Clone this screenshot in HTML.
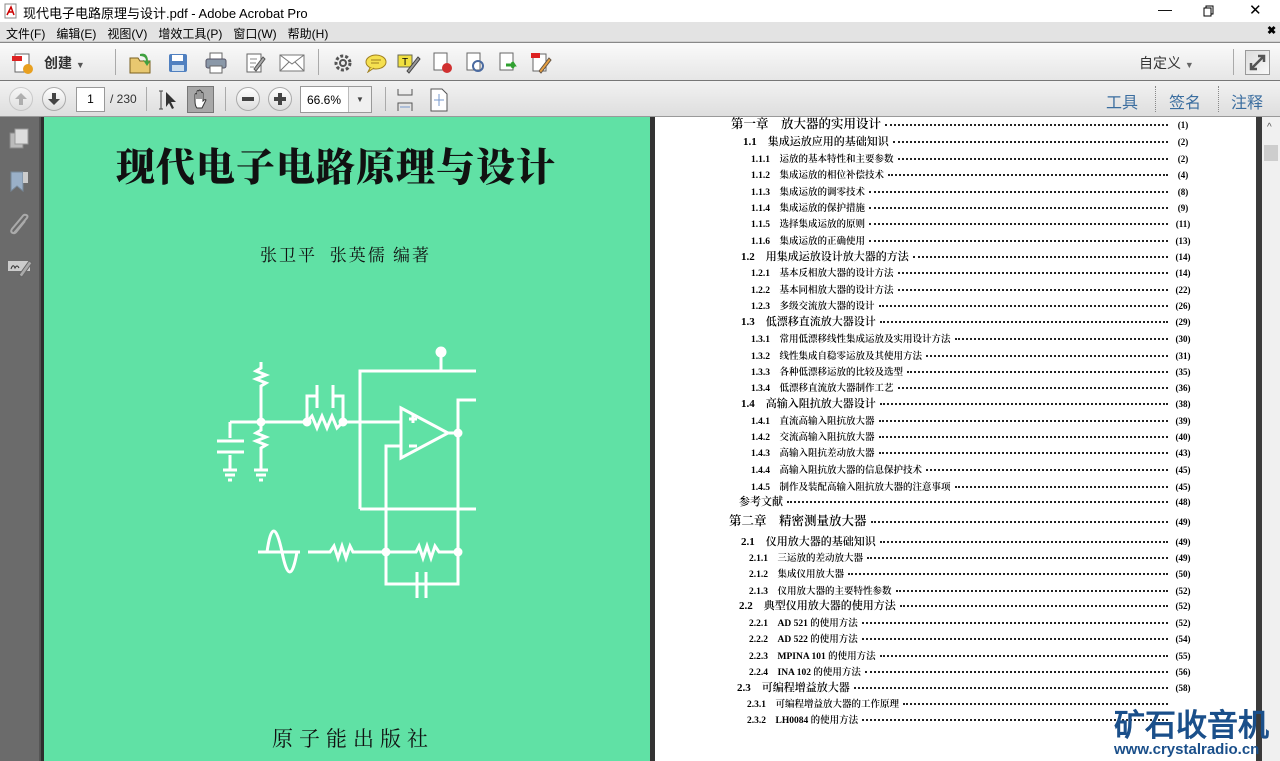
<!DOCTYPE html>
<html><head><meta charset="utf-8"><style>
*{margin:0;padding:0;box-sizing:border-box}
body{width:1280px;height:761px;overflow:hidden;position:relative;background:#525252;font-family:"Liberation Sans","Noto Sans CJK SC",sans-serif;font-size:12px;color:#000}
.a{position:absolute}
#title{left:0;top:0;width:1280px;height:22px;background:#fff}
#menu{left:0;top:22px;width:1280px;height:20px;background:#e3e3e3;border-bottom:1px solid #cfcfcf}
#menu span{margin-right:11px}
#tb1{left:0;top:42px;width:1280px;height:39px;background:linear-gradient(#fafafa,#e6e6e6);border-top:1px solid #888;border-bottom:1px solid #777}
#tb2{left:0;top:81px;width:1280px;height:36px;background:linear-gradient(#f2f2f2,#dedede);border-bottom:1px solid #999}
.sep{position:absolute;width:1px;background:#aaa}
.rb{position:absolute;width:24px;height:24px;border-radius:50%;border:1px solid #aaa;background:linear-gradient(#fff,#ddd)}
#nav{left:0;top:117px;width:40px;height:644px;background:#6b6b6b;border-right:1px solid #555}
#green{left:44px;top:117px;width:606px;height:644px;background:#60e1a5}
#page{left:655px;top:117px;width:601px;height:644px;background:#fff;font-family:"Liberation Serif","Noto Serif CJK SC",serif}
#sb{left:1262px;top:117px;width:18px;height:644px;background:#f0f0f0}
.r{position:absolute;display:flex;align-items:baseline;right:62px;white-space:nowrap;color:#000;font-weight:600}
.r .d{flex:1;border-bottom:2px dotted #222;margin:0 4px;height:1px;transform:translateY(-2px)}
.r .p{width:22px;text-align:center;font-size:9px}
.s{font-size:9.5px}.m{font-size:11px}.c{font-size:12.5px}
</style></head><body>
<div id="title" class="a">
<svg class="a" style="left:4px;top:3px" width="14" height="16"><rect x="1" y="1" width="11" height="14" fill="#fff" stroke="#888"/><path d="M3 12 L7 4 L10 12 M4 9 H9" stroke="#c00" fill="none" stroke-width="1.5"/></svg>
<div class="a" style="left:23px;top:3px;font-size:13px">现代电子电路原理与设计.pdf - Adobe Acrobat Pro</div>
<div class="a" style="left:1158px;top:1px;font-size:14px">—</div>
<svg class="a" style="left:1203px;top:5px" width="12" height="12"><rect x="1" y="3" width="7" height="8" fill="none" stroke="#000"/><path d="M3 3V1H10V9H8" fill="none" stroke="#000"/></svg>
<div class="a" style="left:1249px;top:1px;font-size:15px">✕</div>
</div>
<div id="menu" class="a"><div class="a" style="left:6px;top:3px;font-size:12px"><span>文件(F)</span><span>编辑(E)</span><span>视图(V)</span><span>增效工具(P)</span><span>窗口(W)</span><span>帮助(H)</span></div>
<div class="a" style="left:1267px;top:2px;font-size:11px;font-weight:bold">✖</div></div>
<div id="tb1" class="a">
<svg class="a" style="left:11px;top:8px" width="24" height="24"><rect x="4" y="3" width="14" height="18" fill="#fff" stroke="#666"/><rect x="1" y="5" width="10" height="5" fill="#d22"/><circle cx="17" cy="18" r="5" fill="#e8a020"/></svg>
<div class="a" style="left:44px;top:10px;font-size:14px;font-weight:bold;color:#333">创建 <span style="font-size:9px;color:#555">▼</span></div>
<div class="sep" style="left:115px;top:6px;height:26px"></div>
<svg class="a" style="left:128px;top:7px" width="26" height="26"><path d="M2 8H10L12 11H22V23H2Z" fill="#e8c870" stroke="#7a6020"/><path d="M12 4 Q20 2 20 12 L23 10 L19 16 L15 10 L18 11 Q18 6 12 6Z" fill="#40a040"/></svg>
<svg class="a" style="left:167px;top:9px" width="22" height="22"><rect x="2" y="2" width="18" height="18" rx="2" fill="#5080c0"/><rect x="5" y="3" width="11" height="6" fill="#fff"/><rect x="5" y="13" width="12" height="6" fill="#cde"/></svg>
<svg class="a" style="left:204px;top:9px" width="24" height="22"><rect x="6" y="1" width="12" height="7" fill="#fff" stroke="#666"/><rect x="2" y="7" width="20" height="9" rx="2" fill="#8a98a8" stroke="#556"/><rect x="6" y="14" width="12" height="7" fill="#fff" stroke="#666"/></svg>
<svg class="a" style="left:244px;top:9px" width="22" height="22"><rect x="3" y="2" width="14" height="18" fill="#fff" stroke="#666"/><path d="M6 7H13M6 11H12M6 15H10" stroke="#888"/><path d="M10 17 L19 5 L21 7 L12 19Z" fill="#aaa" stroke="#555"/></svg>
<svg class="a" style="left:279px;top:11px" width="26" height="18"><rect x="1" y="1" width="24" height="16" fill="#fff" stroke="#777"/><path d="M1 1 L13 10 L25 1 M1 17 L10 8 M25 17 L16 8" stroke="#777" fill="none"/></svg>
<div class="sep" style="left:318px;top:6px;height:26px"></div>
<svg class="a" style="left:333px;top:10px" width="20" height="20"><circle cx="10" cy="10" r="7" fill="none" stroke="#555" stroke-width="3" stroke-dasharray="3 2"/><circle cx="10" cy="10" r="3" fill="none" stroke="#555" stroke-width="2"/></svg>
<svg class="a" style="left:364px;top:10px" width="24" height="20"><ellipse cx="12" cy="9" rx="10" ry="7" fill="#f5e050" stroke="#a08020"/><path d="M6 15 L4 19 L10 15" fill="#f5e050" stroke="#a08020"/><path d="M7 7H17M7 10H15" stroke="#a08020"/></svg>
<svg class="a" style="left:397px;top:9px" width="24" height="22"><rect x="1" y="3" width="14" height="12" fill="#f0e040" stroke="#665"/><text x="5" y="13" font-size="10" font-family="Liberation Sans">T</text><path d="M10 19 L21 5 L23 7 L12 21Z" fill="#999" stroke="#444"/></svg>
<svg class="a" style="left:432px;top:9px" width="22" height="22"><rect x="2" y="1" width="13" height="17" fill="#fff" stroke="#666"/><circle cx="15" cy="16" r="5" fill="#d03030"/></svg>
<svg class="a" style="left:465px;top:9px" width="22" height="22"><rect x="2" y="1" width="13" height="17" fill="#fff" stroke="#666"/><circle cx="13" cy="14" r="5" fill="none" stroke="#4a6aa0" stroke-width="2"/></svg>
<svg class="a" style="left:498px;top:9px" width="22" height="22"><rect x="2" y="1" width="13" height="17" fill="#fff" stroke="#666"/><path d="M8 13 H16 L14 10 M16 13 L14 16" stroke="#30a030" stroke-width="3" fill="none"/></svg>
<svg class="a" style="left:530px;top:8px" width="22" height="24"><rect x="3" y="3" width="13" height="17" fill="#fff" stroke="#666"/><rect x="1" y="2" width="9" height="5" fill="#d22"/><path d="M9 20 L19 7 L21 9 L11 22Z" fill="#e8a040" stroke="#654"/></svg>
<div class="a" style="left:1139px;top:10px;font-size:14px;color:#333">自定义 <span style="font-size:9px;color:#666">▼</span></div>
<div class="sep" style="left:1233px;top:6px;height:26px"></div>
<div class="a" style="left:1245px;top:7px;width:25px;height:25px;border:1px solid #999;background:linear-gradient(135deg,#ddd,#f8f8f8)"><svg width="23" height="23"><path d="M5 18 L18 5 M12 5H18V11 M5 12V18H11" stroke="#555" stroke-width="2.5" fill="none"/></svg></div>
</div>
<div id="tb2" class="a">
<div class="rb" style="left:9px;top:6px;opacity:.5"><svg width="22" height="22"><path d="M11 5 L5 11 H9 V17 H13 V11 H17Z" fill="#777"/></svg></div>
<div class="rb" style="left:42px;top:6px"><svg width="22" height="22"><path d="M11 17 L5 11 H9 V5 H13 V11 H17Z" fill="#444"/></svg></div>
<div class="a" style="left:76px;top:6px;width:29px;height:25px;border:1px solid #999;background:#fff;text-align:center;line-height:23px;font-size:12px">1</div>
<div class="a" style="left:110px;top:11px;font-size:12px;color:#333">/ 230</div>
<div class="sep" style="left:146px;top:6px;height:24px"></div>
<svg class="a" style="left:157px;top:8px" width="22" height="22"><path d="M2 2H6M4 2V20M2 20H6" stroke="#444" fill="none"/><path d="M9 3 L9 18 L12 14 L15 20 L17 19 L14 13 L19 13Z" fill="#333"/></svg>
<div class="a" style="left:187px;top:5px;width:27px;height:27px;background:#a8a8a8;border:1px solid #777"><svg width="25" height="25"><path d="M7 14 V8 Q7 6 9 7 V12 V5 Q9 3 11 4 V12 V4 Q11 2 13 4 V12 V6 Q13 4 15 6 V14 Q17 12 18 13 L14 21 H9 Q7 19 7 14Z" fill="#fff" stroke="#333"/></svg></div>
<div class="sep" style="left:225px;top:6px;height:24px"></div>
<div class="rb" style="left:236px;top:6px"><svg width="22" height="22"><rect x="5" y="9" width="12" height="4" fill="#444"/></svg></div>
<div class="rb" style="left:268px;top:6px"><svg width="22" height="22"><path d="M5 9H9V5H13V9H17V13H13V17H9V13H5Z" fill="#444"/></svg></div>
<div class="a" style="left:300px;top:5px;width:72px;height:27px;border:1px solid #999;background:#fff"><span style="position:absolute;left:6px;top:6px;font-size:12px">66.6%</span><div style="position:absolute;left:47px;top:0;width:23px;height:25px;border-left:1px solid #bbb;background:#f0f0f0;text-align:center;line-height:25px;font-size:8px;color:#444">▼</div></div>
<div class="sep" style="left:385px;top:6px;height:24px"></div>
<svg class="a" style="left:396px;top:7px" width="20" height="24"><path d="M2 1V7H16V1 M2 23V15H16V23" stroke="#555" fill="none"/><path d="M4 19H14" stroke="#79c"/></svg>
<svg class="a" style="left:429px;top:7px" width="20" height="24"><path d="M2 1H13L18 6V23H2Z" fill="#fff" stroke="#555"/><path d="M10 6V18M5 12H15" stroke="#79c"/></svg>
<div class="a" style="left:1106px;top:8px;font-size:16px;color:#3a6d9f">工具</div>
<div class="a" style="left:1155px;top:5px;height:26px;border-left:1px dotted #888"></div>
<div class="a" style="left:1169px;top:8px;font-size:16px;color:#3a6d9f">签名</div>
<div class="a" style="left:1218px;top:5px;height:26px;border-left:1px dotted #888"></div>
<div class="a" style="left:1231px;top:8px;font-size:16px;color:#3a6d9f">注释</div>
</div>
<div id="nav" class="a">
<svg class="a" style="left:8px;top:10px" width="24" height="24"><rect x="2" y="6" width="13" height="15" fill="#bbb" stroke="#888"/><rect x="7" y="2" width="13" height="15" fill="#ddd" stroke="#999"/></svg>
<svg class="a" style="left:8px;top:52px" width="24" height="26"><path d="M3 3H15V22L9 17L3 22Z" fill="#9ab0c8" stroke="#789"/><path d="M15 3H20V14H15" fill="#ccc"/></svg>
<svg class="a" style="left:8px;top:96px" width="24" height="26"><path d="M6 20 L18 6 Q21 3 18 2 Q16 1 14 4 L4 16 Q2 19 5 20 Q7 21 9 18 L17 8" fill="none" stroke="#aaa" stroke-width="2"/></svg>
<svg class="a" style="left:7px;top:140px" width="26" height="22"><rect x="1" y="4" width="22" height="10" fill="#ccc"/><path d="M4 12 Q6 6 8 11 Q10 7 12 11" stroke="#333" fill="none"/><path d="M12 18 L22 4 L25 6 L15 20Z" fill="#aaa" stroke="#666"/></svg>
</div>
<div class="a" style="left:41px;top:117px;width:3px;height:644px;background:#2e2e2e"></div>
<div id="green" class="a">
<div class="a" style="left:72px;top:20px;font-family:'Noto Serif CJK SC',serif;font-size:39px;font-weight:900;letter-spacing:1px;color:#111">现代电子电路原理与设计</div>
<div class="a" style="left:216px;top:124px;font-family:'Noto Serif CJK SC',serif;font-size:17px;color:#111;letter-spacing:2px">张卫平&nbsp;&nbsp;张英儒 编著</div>
<div class="a" style="left:228px;top:606px;font-family:'Noto Serif CJK SC',serif;font-size:21px;color:#111;letter-spacing:6px">原子能出版社</div>
<svg class="a" style="left:156px;top:213px" width="300" height="300" viewBox="200 330 300 300" fill="none" stroke="#fff" stroke-width="3">
<path d="M261 362 V368 L256 371 L266 375 L256 379 L266 383 L261 386 V422"/>
<path d="M261 422 V430 L256 433 L266 437 L256 441 L266 445 L261 448 V470"/>
<path d="M254 470 H268 M256 475 H266 M259 480 H263"/>
<path d="M230 422 H307 M230 422 V438 M217 441 H244 M217 452 H244 M230 455 V470 M223 470 H237 M225 475 H235 M228 480 H232"/>
<path d="M307 422 L312 416 L317 428 L322 416 L327 428 L332 416 L337 428 L343 422 H400"/>
<path d="M307 422 V396 H317 M317 385 V408 M333 385 V408 M333 396 H343 V422"/>
<path d="M360 509 V371 H476 M441 357 V371"/>
<path d="M401 408 L448 433 L401 458 Z M409 419 H417 M413 415 V423 M409 446 H417"/>
<path d="M448 433 H458 V400 H476 M458 433 V509 H476 M360 509 H458"/>
<path d="M401 446 H386 V584 H458 V552"/>
<path d="M458 509 V552 H439 L435 546 L431 558 L427 546 L423 558 L419 546 L416 552 H386"/>
<path d="M386 552 H353 L350 546 L346 558 L342 546 L338 558 L334 546 L330 552 H308"/>
<path d="M417 572 V598 M426 572 V598 M386 584 H417 M426 584 H458"/>
<path d="M258 552 H300 M267 552 Q273 510 282 552 Q290 592 297 552"/>
<circle cx="261" cy="422" r="3" fill="#fff"/><circle cx="307" cy="422" r="3" fill="#fff"/><circle cx="343" cy="422" r="3" fill="#fff"/><circle cx="458" cy="433" r="3" fill="#fff"/><circle cx="386" cy="552" r="3" fill="#fff"/><circle cx="458" cy="552" r="3" fill="#fff"/><circle cx="441" cy="352" r="4" fill="#fff"/>
</svg>
</div>
<div class="a" style="left:650px;top:117px;width:5px;height:644px;background:#333"></div>
<div id="page" class="a">
<div class="r c" style="left:76px;top:-3px"><span>第一章　放大器的实用设计</span><span class="d"></span><span class="p">(1)</span></div>
<div class="r m" style="left:88px;top:16px"><span>1.1　集成运放应用的基础知识</span><span class="d"></span><span class="p">(2)</span></div>
<div class="r s" style="left:96px;top:34px"><span>1.1.1　运放的基本特性和主要参数</span><span class="d"></span><span class="p">(2)</span></div>
<div class="r s" style="left:96px;top:50px"><span>1.1.2　集成运放的相位补偿技术</span><span class="d"></span><span class="p">(4)</span></div>
<div class="r s" style="left:96px;top:67px"><span>1.1.3　集成运放的调零技术</span><span class="d"></span><span class="p">(8)</span></div>
<div class="r s" style="left:96px;top:83px"><span>1.1.4　集成运放的保护措施</span><span class="d"></span><span class="p">(9)</span></div>
<div class="r s" style="left:96px;top:99px"><span>1.1.5　选择集成运放的原则</span><span class="d"></span><span class="p">(11)</span></div>
<div class="r s" style="left:96px;top:116px"><span>1.1.6　集成运放的正确使用</span><span class="d"></span><span class="p">(13)</span></div>
<div class="r m" style="left:86px;top:131px"><span>1.2　用集成运放设计放大器的方法</span><span class="d"></span><span class="p">(14)</span></div>
<div class="r s" style="left:96px;top:148px"><span>1.2.1　基本反相放大器的设计方法</span><span class="d"></span><span class="p">(14)</span></div>
<div class="r s" style="left:96px;top:165px"><span>1.2.2　基本同相放大器的设计方法</span><span class="d"></span><span class="p">(22)</span></div>
<div class="r s" style="left:96px;top:181px"><span>1.2.3　多级交流放大器的设计</span><span class="d"></span><span class="p">(26)</span></div>
<div class="r m" style="left:86px;top:196px"><span>1.3　低漂移直流放大器设计</span><span class="d"></span><span class="p">(29)</span></div>
<div class="r s" style="left:96px;top:214px"><span>1.3.1　常用低漂移线性集成运放及实用设计方法</span><span class="d"></span><span class="p">(30)</span></div>
<div class="r s" style="left:96px;top:231px"><span>1.3.2　线性集成自稳零运放及其使用方法</span><span class="d"></span><span class="p">(31)</span></div>
<div class="r s" style="left:96px;top:247px"><span>1.3.3　各种低漂移运放的比较及选型</span><span class="d"></span><span class="p">(35)</span></div>
<div class="r s" style="left:96px;top:263px"><span>1.3.4　低漂移直流放大器制作工艺</span><span class="d"></span><span class="p">(36)</span></div>
<div class="r m" style="left:86px;top:278px"><span>1.4　高输入阻抗放大器设计</span><span class="d"></span><span class="p">(38)</span></div>
<div class="r s" style="left:96px;top:296px"><span>1.4.1　直流高输入阻抗放大器</span><span class="d"></span><span class="p">(39)</span></div>
<div class="r s" style="left:96px;top:312px"><span>1.4.2　交流高输入阻抗放大器</span><span class="d"></span><span class="p">(40)</span></div>
<div class="r s" style="left:96px;top:328px"><span>1.4.3　高输入阻抗差动放大器</span><span class="d"></span><span class="p">(43)</span></div>
<div class="r s" style="left:96px;top:345px"><span>1.4.4　高输入阻抗放大器的信息保护技术</span><span class="d"></span><span class="p">(45)</span></div>
<div class="r s" style="left:96px;top:362px"><span>1.4.5　制作及装配高输入阻抗放大器的注意事项</span><span class="d"></span><span class="p">(45)</span></div>
<div class="r m" style="left:84px;top:376px"><span>参考文献</span><span class="d"></span><span class="p">(48)</span></div>
<div class="r c" style="left:74px;top:394px"><span>第二章　精密测量放大器</span><span class="d"></span><span class="p">(49)</span></div>
<div class="r m" style="left:86px;top:416px"><span>2.1　仪用放大器的基础知识</span><span class="d"></span><span class="p">(49)</span></div>
<div class="r s" style="left:94px;top:433px"><span>2.1.1　三运放的差动放大器</span><span class="d"></span><span class="p">(49)</span></div>
<div class="r s" style="left:94px;top:449px"><span>2.1.2　集成仪用放大器</span><span class="d"></span><span class="p">(50)</span></div>
<div class="r s" style="left:94px;top:466px"><span>2.1.3　仪用放大器的主要特性参数</span><span class="d"></span><span class="p">(52)</span></div>
<div class="r m" style="left:84px;top:480px"><span>2.2　典型仪用放大器的使用方法</span><span class="d"></span><span class="p">(52)</span></div>
<div class="r s" style="left:94px;top:498px"><span>2.2.1　AD 521 的使用方法</span><span class="d"></span><span class="p">(52)</span></div>
<div class="r s" style="left:94px;top:514px"><span>2.2.2　AD 522 的使用方法</span><span class="d"></span><span class="p">(54)</span></div>
<div class="r s" style="left:94px;top:531px"><span>2.2.3　MPINA 101 的使用方法</span><span class="d"></span><span class="p">(55)</span></div>
<div class="r s" style="left:94px;top:547px"><span>2.2.4　INA 102 的使用方法</span><span class="d"></span><span class="p">(56)</span></div>
<div class="r m" style="left:82px;top:562px"><span>2.3　可编程增益放大器</span><span class="d"></span><span class="p">(58)</span></div>
<div class="r s" style="left:92px;top:579px"><span>2.3.1　可编程增益放大器的工作原理</span><span class="d"></span><span class="p"></span></div>
<div class="r s" style="left:92px;top:595px"><span>2.3.2　LH0084 的使用方法</span><span class="d"></span><span class="p"></span></div>
</div>
<div class="a" style="left:1256px;top:117px;width:6px;height:644px;background:#3a3a3a"></div>
<div id="sb" class="a"><div style="position:absolute;left:5px;top:5px;font-size:10px;color:#555">^</div><div style="position:absolute;left:2px;top:28px;width:14px;height:16px;background:#cdcdcd"></div></div>
<div class="a" style="left:1114px;top:700px;font-family:'WenQuanYi Zen Hei',sans-serif;font-size:31px;font-weight:bold;color:#1a4f8a;letter-spacing:0px">矿石收音机</div>
<div class="a" style="left:1114px;top:741px;font-size:15px;font-weight:bold;color:#1a4f8a">www.crystalradio.cn</div>
</body></html>
